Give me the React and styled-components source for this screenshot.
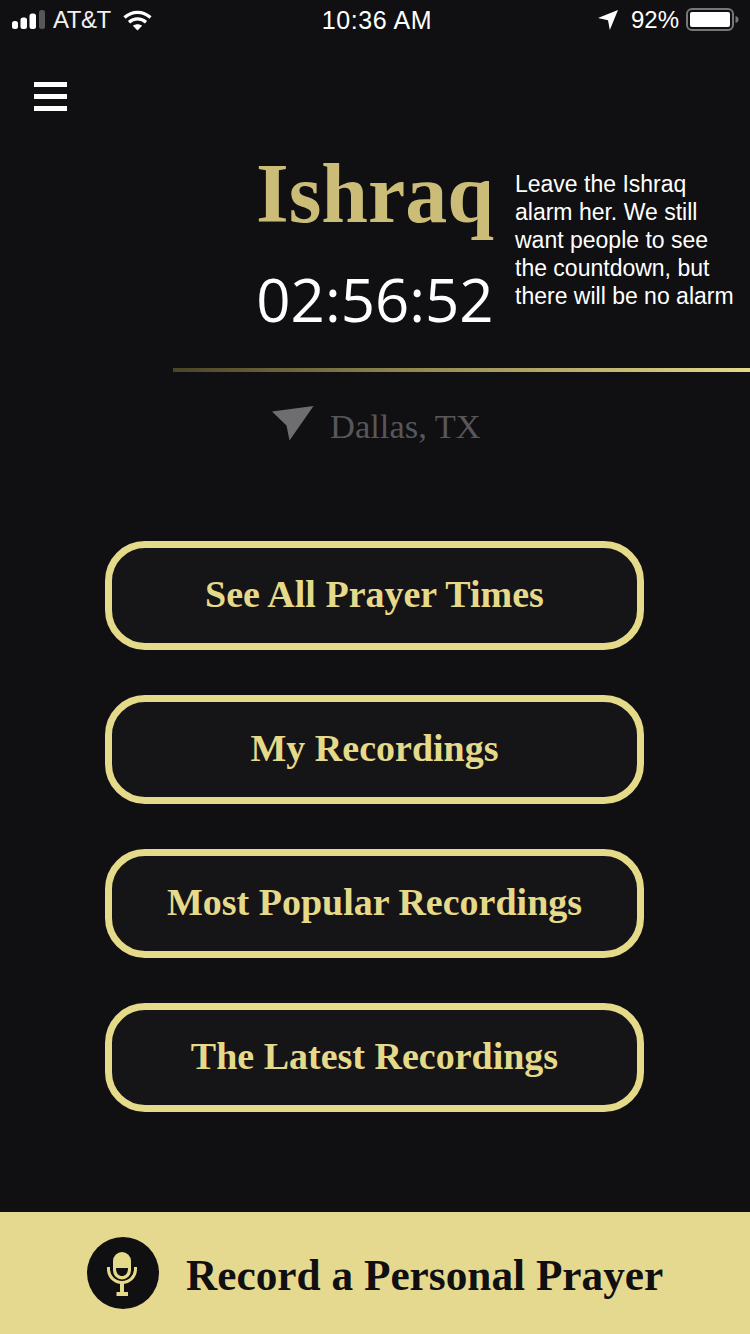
import styled, { createGlobalStyle } from "styled-components";

const GOLD = "#e5d98a";

const GlobalStyle = createGlobalStyle`
  html, body {
    margin: 0;
    padding: 0;
    background: #100f12;
  }
  * { box-sizing: border-box; }
`;

const Page = styled.div`
  width: 750px;
  height: 1334px;
  background: #100f12;
  display: flex;
  flex-direction: column;
  overflow: hidden;
`;

/* status bar */
const StatusBar = styled.div`
  height: 40px;
  padding: 0 11px 0 12px;
  display: grid;
  grid-template-columns: 1fr auto 1fr;
  align-items: center;
  color: #fff;
  font-family: "Liberation Sans", Arial, sans-serif;
  font-size: 24px;
`;

const StatusLeft = styled.div`
  display: flex;
  align-items: center;
  gap: 7px;
`;

const StatusRight = styled.div`
  display: flex;
  align-items: center;
  justify-content: flex-end;
`;

const Carrier = styled.span`
  margin-right: 5px;
  color: #f0f0f0;
  letter-spacing: -0.5px;
  font-size: 24px;
`;

const Clock = styled.span`
  padding-left: 3px;
  font-size: 25px;
  letter-spacing: 0.6px;
`;

const Battery = styled.span`
  margin-left: 7px;
  display: flex;
`;

const Percent = styled.span`
  margin-left: 13px;
`;

/* hamburger */
const MenuButton = styled.div`
  margin: 42px 0 0 34px;
  width: 33px;
  display: flex;
  flex-direction: column;
  gap: 7px;
`;

const MenuLine = styled.span`
  display: block;
  height: 5px;
  background: #fff;
`;

/* prayer heading */
const Hero = styled.div`
  margin-top: 37px;
  display: grid;
  grid-template-columns: 255px 240px 1fr;
`;

const Countdown = styled.div`
  grid-column: 2;
  display: flex;
  flex-direction: column;
  align-items: center;
`;

const PrayerName = styled.h1`
  margin: 0;
  font-family: "Liberation Serif", "Times New Roman", serif;
  font-weight: 700;
  font-size: 84px;
  line-height: 92px;
  color: #cbbd78;
  white-space: nowrap;
`;

const Timer = styled.div`
  margin-top: 24px;
  font-family: "Open Sans", sans-serif;
  font-size: 60px;
  line-height: 70px;
  color: #fff;
  white-space: nowrap;
`;

const Note = styled.p`
  grid-column: 3;
  margin: 22px 0 0 20px;
  font-family: "Liberation Sans", Arial, sans-serif;
  font-size: 23px;
  line-height: 28px;
  color: #fff;
  white-space: nowrap;
`;

const Divider = styled.div`
  margin: 34px 0 0 173px;
  height: 4px;
  background: linear-gradient(90deg, #4a4428 0%, #8f8650 40%, ${GOLD} 100%);
`;

const Location = styled.div`
  margin: 32px 0 0 272px;
  height: 44px;
  display: flex;
  align-items: center;
  gap: 16px;
`;

const LocationGlyph = styled.svg`
  margin-bottom: 6px;
`;

const LocationText = styled.span`
  font-family: "Liberation Serif", "Times New Roman", serif;
  font-size: 34.500px;
  color: #57565a;
`;

/* buttons */
const ButtonList = styled.div`
  margin: 93px 0 0 105px;
  width: 539px;
  display: flex;
  flex-direction: column;
  gap: 45px;
`;

const MenuAction = styled.div`
  height: 109px;
  padding-bottom: 3px;
  border: 7px solid ${GOLD};
  border-radius: 40px;
  background: #151417;
  display: flex;
  align-items: center;
  justify-content: center;
  font-family: "Liberation Serif", "Times New Roman", serif;
  font-weight: 700;
  font-size: 38px;
  color: ${GOLD};
  white-space: nowrap;
`;

/* record bar */
const RecordBar = styled.div`
  margin-top: auto;
  height: 122px;
  padding-left: 87px;
  background: #e5d98f;
  display: flex;
  align-items: center;
  gap: 27px;
`;

const MicCircle = styled.div`
  width: 72px;
  height: 72px;
  border-radius: 50%;
  background: #100f12;
  flex: none;
`;

const RecordLabel = styled.span`
  padding-top: 3px;
  font-family: "Liberation Serif", "Times New Roman", serif;
  font-weight: 700;
  font-size: 43.300px;
  color: #100f12;
  white-space: nowrap;
`;

const SignalIcon = () => (
  <svg width="34" height="20" viewBox="0 0 34 20">
    <rect x="0" y="11" width="6" height="8" rx="2.5" fill="#fff" />
    <rect x="8.500" y="7.500" width="6.500" height="11.500" rx="2.5" fill="#fff" />
    <rect x="17.500" y="3.500" width="6.500" height="15.500" rx="2.5" fill="#fff" />
    <rect x="27" y="0" width="6" height="19" rx="2.5" fill="#57575a" />
  </svg>
);

const WifiIcon = () => (
  <svg width="29" height="21" viewBox="0 0 29 21" fill="none" stroke="#fff" strokeWidth="3.2">
    <path d="M1.5 7.5C9 .6 20 .6 27.5 7.5" />
    <path d="M6 12.2c5-4.4 12-4.4 17 0" />
    <path d="M14.5 20.5l-4.6-4.8c2.6-2 6.6-2 9.2 0z" fill="#fff" stroke="none" />
  </svg>
);

const StatusArrow = () => (
  <svg width="20" height="20" viewBox="0 0 20 20">
    <path d="M20 0L11.800 20 10 10.300 0 8z" fill="#fff" />
  </svg>
);

const LocationArrow = () => (
  <LocationGlyph width="42" height="35" viewBox="0 0 42 35">
    <path d="M0 5.500L41.500 0 17.500 34.500 14.500 19.500z" fill="#6e6e70" />
  </LocationGlyph>
);

const BatteryIcon = () => (
  <svg width="53" height="24" viewBox="0 0 53 24">
    <rect x="1" y="1" width="46" height="21" rx="5" fill="none" stroke="#77777a" strokeWidth="2" />
    <rect x="4" y="4" width="40" height="15" rx="2" fill="#fff" />
    <path d="M49.500 8c2 .4 3 1.800 3 3.500s-1 3.100-3 3.500z" fill="#77777a" />
  </svg>
);

const MicIcon = () => (
  <svg width="72" height="72" viewBox="0 0 72 72">
    <rect x="26" y="15" width="18" height="27.500" rx="9" fill={GOLD} />
    <path d="M29 31h12c0 5-2.200 8-6 8s-6-3-6-8z" fill="#100f12" />
    <path d="M21.500 30v2c0 7.800 6 13.500 13.500 13.500s13.500-5.700 13.500-13.500v-2" fill="none" stroke={GOLD} strokeWidth="3" />
    <path d="M35 45v11" stroke={GOLD} strokeWidth="4" />
    <rect x="29.500" y="55" width="11.500" height="4" fill={GOLD} />
  </svg>
);

const actions = [
  "See All Prayer Times",
  "My Recordings",
  "Most Popular Recordings",
  "The Latest Recordings",
];

export default function App() {
  return (
    <Page>
      <GlobalStyle />
      <StatusBar>
        <StatusLeft>
          <SignalIcon />
          <Carrier>AT&amp;T</Carrier>
          <WifiIcon />
        </StatusLeft>
        <Clock>10:36 AM</Clock>
        <StatusRight>
          <StatusArrow />
          <Percent>92%</Percent>
          <Battery>
            <BatteryIcon />
          </Battery>
        </StatusRight>
      </StatusBar>

      <MenuButton>
        <MenuLine />
        <MenuLine />
        <MenuLine />
      </MenuButton>

      <Hero>
        <Countdown>
          <PrayerName>Ishraq</PrayerName>
          <Timer>02:56:52</Timer>
        </Countdown>
        <Note>
          Leave the Ishraq<br />
          alarm her. We still<br />
          want people to see<br />
          the countdown, but<br />
          there will be no alarm
        </Note>
      </Hero>

      <Divider />

      <Location>
        <LocationArrow />
        <LocationText>Dallas, TX</LocationText>
      </Location>

      <ButtonList>
        {actions.map((label) => (
          <MenuAction key={label}>{label}</MenuAction>
        ))}
      </ButtonList>

      <RecordBar>
        <MicCircle>
          <MicIcon />
        </MicCircle>
        <RecordLabel>Record a Personal Prayer</RecordLabel>
      </RecordBar>
    </Page>
  );
}
